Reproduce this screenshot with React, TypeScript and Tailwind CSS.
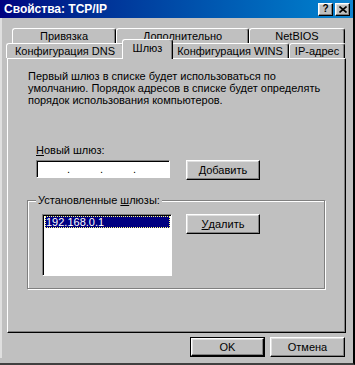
import React from "react";

const raised =
  "border border-t-white border-l-white border-r-black border-b-black shadow-[inset_-1px_-1px_0_#808080,inset_1px_1px_0_#dfdfdf]";

function Tab({ label, width, selected }: { label: string; width: string; selected?: boolean }) {
  return (
    <div
      className={`${width} ${
        selected ? "relative z-10 h-[20px] mb-[-1px] -mx-[2px] pb-[3px]" : "h-[15px]"
      } flex shrink-0 items-center justify-center rounded-t-[3px] border-l border-t border-r border-l-white border-t-white border-r-black bg-[#c0c0c0] shadow-[inset_-1px_0_0_#808080]`}
    >
      <span className="leading-none">{label}</span>
    </div>
  );
}

function Button({ children, className = "", isDefault }: { children: React.ReactNode; className?: string; isDefault?: boolean }) {
  const inner = (
    <div className={`flex h-full w-full items-center justify-center bg-[#c0c0c0] ${raised}`}>{children}</div>
  );
  if (isDefault) {
    return <div className={`border border-black ${className}`}>{inner}</div>;
  }
  return <div className={className}>{inner}</div>;
}

export default function App() {
  return (
    <div className="h-[365px] w-[355px] overflow-hidden bg-[#c0c0c0] font-['Liberation_Sans',Arial,sans-serif] text-[11px] text-black">
      <div className="flex h-full w-[355px] flex-col border-r-2 border-b-2 border-r-black border-b-[#404040] pb-[5px]">
        {/* title bar */}
        <div className="flex h-[18px] items-center justify-between bg-linear-to-r from-[#000080] to-[#1084d0] pl-[4px] pr-[3px]">
          <span className="text-[12px] font-bold text-white">Свойства: TCP/IP</span>
          <div className="flex gap-[2px]">
            <div className={`flex h-[13px] w-[15px] items-center justify-center bg-[#c0c0c0] text-[10px] font-bold leading-none ${raised}`}>?</div>
            <div className={`flex h-[13px] w-[15px] items-center justify-center bg-[#c0c0c0] ${raised}`}>
              <svg width="8" height="7" viewBox="0 0 8 7">
                <path d="M0.5 0.5 L7.5 6.5 M7.5 0.5 L0.5 6.5" stroke="black" strokeWidth="1.6" />
              </svg>
            </div>
          </div>
        </div>

        <div className="flex flex-1 flex-col border-l-2 border-l-[#dfdfdf]">
          {/* tabs */}
          <div className="mt-[10px] flex pl-[10px]">
            <Tab label="Привязка" width="w-[104px]" />
            <Tab label="Дополнительно" width="w-[133px]" />
            <Tab label="NetBIOS" width="w-[96px]" />
          </div>
          <div className="flex h-[15px] items-end pl-[4px]">
            <Tab label="Конфигурация DNS" width="w-[118px]" />
            <Tab label="Шлюз" width="w-[51px]" selected />
            <Tab label="Конфигурация WINS" width="w-[118px]" />
            <Tab label="IP-адрес" width="w-[56px]" />
          </div>

          {/* panel */}
          <div className="ml-[5px] flex h-[275px] w-[339px] flex-col border border-t-white border-l-white border-r-black border-b-black pl-[20px] pt-[11px] shadow-[inset_-1px_-1px_0_#808080]">
            <p className="w-[300px] leading-[12px]">
              Первый шлюз в списке будет использоваться по умолчанию. Порядок адресов в списке будет определять порядок использования компьютеров.
            </p>

            <div className="mt-[38px] flex items-end pl-[8px]">
              <div className="flex flex-col">
                <span className="leading-[12px]">
                  <u>Н</u>овый шлюз:
                </span>
                <div className="mt-[4px] flex h-[18px] w-[134px] items-center border border-t-[#808080] border-l-[#808080] border-r-white border-b-white bg-white pl-[30px] shadow-[inset_1px_1px_0_#000]">
                  <span className="w-[33px]">.</span>
                  <span className="w-[33px]">.</span>
                  <span>.</span>
                </div>
              </div>
              <Button className="mb-[-2px] ml-[16px] h-[20px] w-[74px]">
                <u>Д</u>обавить
              </Button>
            </div>

            {/* group box */}
            <div className="mt-[22px] ml-[-1px] flex h-[89px] w-[298px] shrink-0 flex-col border border-[#808080] pl-[14px] shadow-[inset_1px_1px_0_#fff,1px_1px_0_#fff]">
              <span className="ml-[-6px] mt-[-7px] w-fit bg-[#c0c0c0] px-[2px] leading-[12px]">
                Установленные <u>ш</u>люзы:
              </span>
              <div className="mt-[8px] flex items-start">
                <div className="h-[62px] w-[130px] border border-t-[#808080] border-l-[#808080] border-r-white border-b-white bg-white p-[1px] shadow-[inset_1px_1px_0_#000]">
                  <div className="ml-[1px] h-[12px] bg-[#000080] pl-[1px] leading-[12px] text-white outline-1 outline-dotted outline-offset-[-1px] outline-[#ffff80]">
                    192.168.0.1
                  </div>
                </div>
                <Button className="ml-[14px] h-[20px] w-[74px]">
                  <u>У</u>далить
                </Button>
              </div>
            </div>
          </div>

          {/* bottom buttons */}
          <div className="mt-[4px] flex justify-end gap-[5px] pr-[8px]">
            <Button isDefault className="h-[20px] w-[75px]">
              OK
            </Button>
            <Button className="h-[20px] w-[75px]">Отмена</Button>
          </div>
        </div>
      </div>
    </div>
  );
}
